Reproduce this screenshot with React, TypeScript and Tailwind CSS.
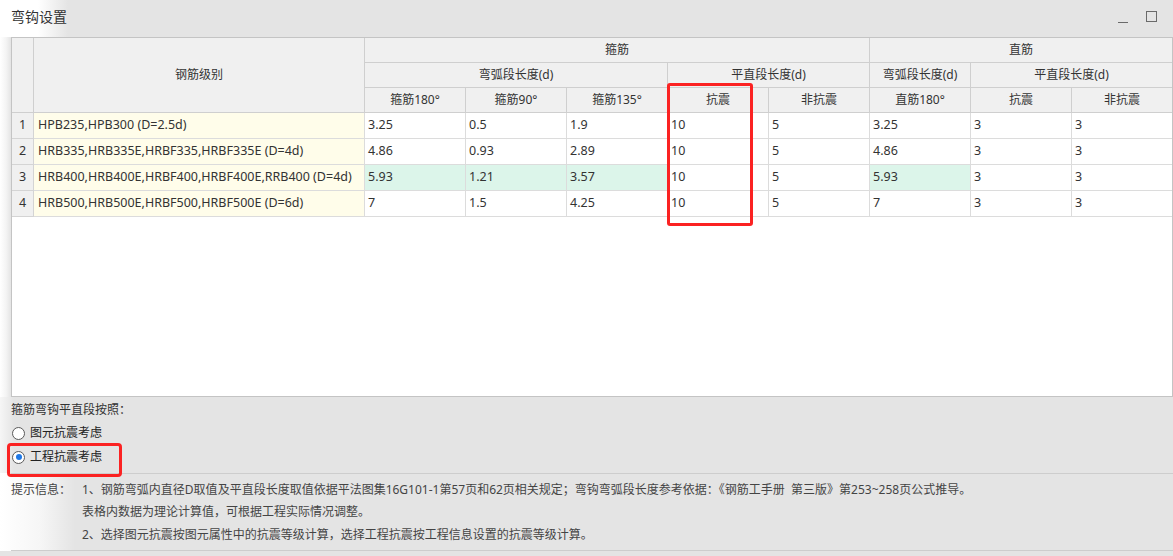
import React from "react";

// ---------------------------------------------------------------------------
// Data
// ---------------------------------------------------------------------------

interface HookRow {
  grade: string;
  values: string[];
  highlight?: boolean;
}

const ROWS: HookRow[] = [
  { grade: "HPB235,HPB300 (D=2.5d)", values: ["3.25", "0.5", "1.9", "10", "5", "3.25", "3", "3"] },
  { grade: "HRB335,HRB335E,HRBF335,HRBF335E (D=4d)", values: ["4.86", "0.93", "2.89", "10", "5", "4.86", "3", "3"] },
  {
    grade: "HRB400,HRB400E,HRBF400,HRBF400E,RRB400 (D=4d)",
    values: ["5.93", "1.21", "3.57", "10", "5", "5.93", "3", "3"],
    highlight: true,
  },
  { grade: "HRB500,HRB500E,HRBF500,HRBF500E (D=6d)", values: ["7", "1.5", "4.25", "10", "5", "7", "3", "3"] },
];

// columns whose row-3 cell is tinted green
const GREEN_COLS = [0, 1, 2, 5];

const FONT = "[font-family:'Noto_Sans','Noto_Sans_CJK_SC',sans-serif]";

// ---------------------------------------------------------------------------
// Small pieces
// ---------------------------------------------------------------------------

function Radio({ checked, label }: { checked?: boolean; label: string }) {
  return (
    <div className="flex items-center h-[24px] pl-[12px]">
      <span className="flex items-center justify-center w-[13px] h-[13px] rounded-full border border-[#5a5a5a] bg-white">
        {checked && <span className="w-[6px] h-[6px] rounded-full bg-[#1e78e6]" />}
      </span>
      <span className="ml-[5px] text-[12px] text-[#222]">{label}</span>
    </div>
  );
}

function Head({ className, children }: { className: string; children?: React.ReactNode }) {
  return (
    <div
      className={`flex items-center justify-center bg-[#f0f0f0] border-[#cfcfcf] text-[12px] text-[#333] ${className}`}
    >
      {children}
    </div>
  );
}

// ---------------------------------------------------------------------------
// App
// ---------------------------------------------------------------------------

export default function App() {
  return (
    <div
      className={`w-[1173px] h-[556px] overflow-hidden bg-[#e4e4e4] ${FONT} bg-[linear-gradient(to_right,#ffffff_38px,#e4e4e4_68px)] bg-no-repeat bg-[length:100%_37px]`}
    >
      {/* ── Title bar ─────────────────────────────────────────── */}
      <div className="flex items-center h-[37px] pl-[11px] pr-[16px]">
        <span className="text-[14px] text-[#333] leading-none pb-[4px]">弯钩设置</span>
        <div className="ml-auto flex items-center gap-[18px] pb-[4px]">
          <span className="block w-[10px] h-[1.5px] bg-[#6a6a6a] mt-[12px]" />
          <span className="block w-[11px] h-[11px] border-[1.5px] border-[#6a6a6a]" />
        </div>
      </div>

      {/* ── Table ─────────────────────────────────────────────── */}
      <div className="bg-[linear-gradient(to_right,#ffffff_0px,#f4f4f4_6px,#e4e4e4_11px)]">
        <div className="relative ml-[11px] w-[1162px] h-[360px] border border-[#c4c4c4] bg-white">
          <div className="grid grid-cols-[22px_331px_101px_101px_101px_101px_101px_101px_101px_100px] grid-rows-[25px_25px_25px_26px_26px_26px_26px]">
            {/* header */}
            <Head className="row-span-3 border-r border-b" />
            <Head className="row-span-3 border-r border-b">钢筋级别</Head>
            <Head className="col-span-5 border-r border-b">箍筋</Head>
            <Head className="col-span-3 border-b">直筋</Head>
            <Head className="col-span-3 border-r border-b">弯弧段长度(d)</Head>
            <Head className="col-span-2 border-r border-b">平直段长度(d)</Head>
            <Head className="border-r border-b">弯弧段长度(d)</Head>
            <Head className="col-span-2 border-b">平直段长度(d)</Head>
            <Head className="border-r border-b">箍筋180°</Head>
            <Head className="border-r border-b">箍筋90°</Head>
            <Head className="border-r border-b">箍筋135°</Head>
            <Head className="border-r border-b">抗震</Head>
            <Head className="border-r border-b">非抗震</Head>
            <Head className="border-r border-b">直筋180°</Head>
            <Head className="border-r border-b">抗震</Head>
            <Head className="border-b">非抗震</Head>

            {/* body */}
            {ROWS.map((row, i) => (
              <React.Fragment key={row.grade}>
                <div className="flex items-center justify-center bg-[#f0f0f0] border-r border-b border-[#d4d4d4] text-[12.5px] text-[#333]">
                  {i + 1}
                </div>
                <div className="flex items-center pl-[4px] bg-[#fffdea] border-r border-b border-[#dcdcdc] text-[12.5px] text-[#333] whitespace-nowrap">
                  {row.grade}
                </div>
                {row.values.map((v, j) => (
                  <div
                    key={j}
                    className={`flex items-center pl-[3px] border-b border-[#dcdcdc] text-[12.5px] text-[#333] ${
                      j < 7 ? "border-r" : ""
                    } ${row.highlight && GREEN_COLS.includes(j) ? "bg-[#dcf5ea]" : "bg-white"}`}
                  >
                    {v}
                  </div>
                ))}
              </React.Fragment>
            ))}
          </div>

          {/* red marker around 抗震 column */}
          <div className="absolute left-[655px] top-[45px] w-[86px] h-[143px] border-[3px] border-[#fb2222] rounded-[3px] pointer-events-none" />
        </div>
      </div>

      {/* ── Radio options ─────────────────────────────────────── */}
      <div className="pt-[1px] bg-[linear-gradient(to_right,#f6f6f6_0px,#e4e4e4_14px)]">
        <div className="h-[23px] flex items-center pl-[11px] text-[12px] text-[#333]">箍筋弯钩平直段按照：</div>
        <Radio label="图元抗震考虑" />
        <div className="relative">
          <Radio checked label="工程抗震考虑" />
          <div className="absolute left-[7px] top-[-2px] w-[115px] h-[34px] border-[3px] border-[#fb2222] rounded-[4px] pointer-events-none" />
        </div>
        <div className="h-[4px]" />
      </div>

      {/* ── Hints ─────────────────────────────────────────────── */}
      <div className="bg-[linear-gradient(to_right,#ffffff_0px,#f6f6f6_40px,#e4e4e4_75px)]">
        <div className="ml-[11px] border-t border-[#cdcdcd]">
          <div className="flex pt-[5px] text-[12px] text-[#444]">
            <div className="w-[71px] shrink-0 leading-[22px]">提示信息：</div>
            <div className="flex flex-col">
              <div className="leading-[22px] whitespace-pre">
                1、钢筋弯弧内直径D取值及平直段长度取值依据平法图集16G101-1第57页和62页相关规定；弯钩弯弧段长度参考依据：《钢筋工手册  第三版》第253~258页公式推导。
              </div>
              <div className="leading-[22px]">表格内数据为理论计算值，可根据工程实际情况调整。</div>
              <div className="leading-[23px]">2、选择图元抗震按图元属性中的抗震等级计算，选择工程抗震按工程信息设置的抗震等级计算。</div>
            </div>
          </div>
          <div className="mt-[4px] border-t border-[#cdcdcd]" />
        </div>
      </div>
    </div>
  );
}
